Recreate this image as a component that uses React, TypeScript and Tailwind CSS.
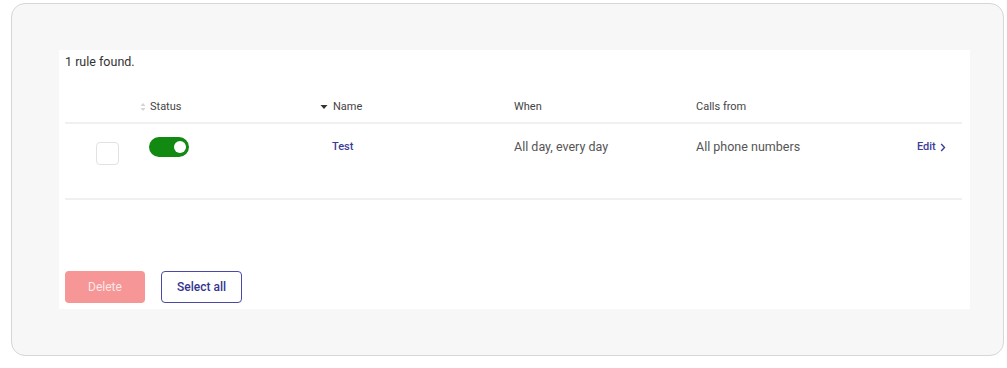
import React, { useState } from "react"

const font = { fontFamily: "Roboto, 'Liberation Sans', sans-serif" }

const SortIcon = () => (
  <svg width="6" height="10" viewBox="0 0 6 10" className="mr-[4px]">
    <path d="M3 1 L5.5 4 H0.5 Z" fill="#d4d4d4" />
    <path d="M3 9 L5.5 6 H0.5 Z" fill="#d4d4d4" />
  </svg>
)

const CaretDown = () => (
  <svg width="8" height="6" viewBox="0 0 8 6" className="mr-[5px]">
    <path d="M0.5 1 H7.5 L4 5 Z" fill="#333" />
  </svg>
)

const Chevron = () => (
  <svg width="6" height="9" viewBox="0 0 6 9" className="ml-[4px]">
    <path d="M1.2 1 L4.5 4.5 L1.2 8" fill="none" stroke="#3c3c9a" strokeWidth="1.4" />
  </svg>
)

const Toggle = ({ on, onClick }: { on: boolean; onClick: () => void }) => (
  <button
    onClick={onClick}
    className={`w-[40px] h-[20px] rounded-full flex items-center px-[3px] ${
      on ? "bg-[#128a12] justify-end" : "bg-[#c8c8c8] justify-start"
    }`}
  >
    <span className="w-[12px] h-[12px] rounded-full bg-white block" />
  </button>
)

export default function App() {
  const [enabled, setEnabled] = useState(true)
  const [checked, setChecked] = useState(false)

  return (
    <div className="w-[1007px] h-[368px] bg-white pt-[3px] pl-[11px]" style={font}>
      <div className="w-[993px] h-[353px] border border-[#d6d6d6] rounded-[14px] bg-[#f7f7f7] pt-[46px] pl-[47px]">
        <div className="w-[911px] h-[259px] bg-white px-[6px] pt-[4px]">
          <p className="text-[12.5px] leading-[16px] text-[#333]">1 rule found.</p>

          {/* header */}
          <div className="flex items-center h-[32px] mt-[22px] text-[11px] text-[#444] border-b-2 border-[#f0f0f0] w-[897px]">
            <div className="w-[75px]" />
            <div className="w-[180px] flex items-center">
              <SortIcon />
              Status
            </div>
            <div className="w-[194px] flex items-center">
              <CaretDown />
              Name
            </div>
            <div className="w-[182px]">When</div>
            <div className="w-[221px]">Calls from</div>
            <div className="flex-1" />
          </div>

          {/* row */}
          <div className="flex items-start h-[76px] pt-[13px] border-b-2 border-[#f0f0f0] w-[897px] text-[12.5px] text-[#555]">
            <div className="w-[75px] flex pl-[31px] pt-[5px]">
              <button
                onClick={() => setChecked((c) => !c)}
                className={`w-[23px] h-[23px] rounded-[4px] border border-[#e2e2e2] ${
                  checked ? "bg-[#3c3c9a]" : "bg-white"
                }`}
              />
            </div>
            <div className="w-[180px] pl-[9px]">
              <Toggle on={enabled} onClick={() => setEnabled((e) => !e)} />
            </div>
            <div className="w-[194px] pl-[12px] h-[20px] flex items-center">
              <span className="text-[11px] font-medium text-[#3c3c9a]">Test</span>
            </div>
            <div className="w-[182px] h-[20px] flex items-center">All day, every day</div>
            <div className="w-[221px] h-[20px] flex items-center">All phone numbers</div>
            <div className="flex-1 h-[20px] flex items-center text-[11px] font-medium text-[#3c3c9a]">
              Edit
              <Chevron />
            </div>
          </div>

          {/* actions */}
          <div className="flex gap-[16px] mt-[71px]">
            <button className="w-[80px] h-[32px] rounded-[4px] bg-[#f69696] text-[12px] text-[#fde8e8]">
              Delete
            </button>
            <button className="w-[81px] h-[32px] rounded-[4px] border border-[#4a4aa6] bg-white text-[12px] font-medium text-[#35358f]">
              Select all
            </button>
          </div>
        </div>
      </div>
    </div>
  )
}
